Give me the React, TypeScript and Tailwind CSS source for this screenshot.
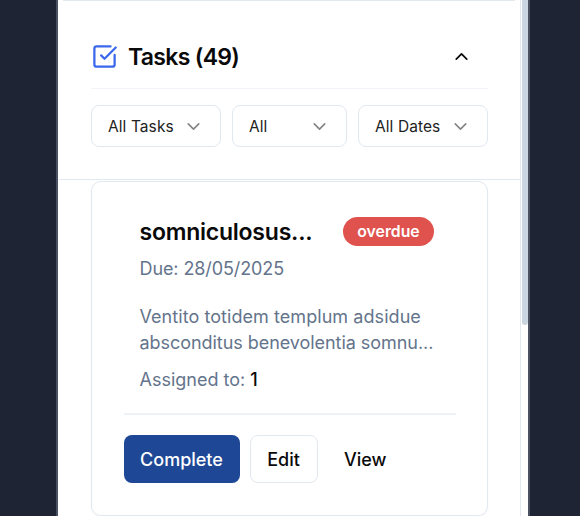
import { ChevronDown, ChevronUp, SquareCheckBig } from "lucide-react";

function Filter({ label, className }: { label: string; className: string }) {
  return (
    <button
      className={`flex h-[42px] items-center justify-between rounded-lg border border-[#e2e8f0] bg-white pl-4 pr-4 text-[15.5px] tracking-[0.08px] text-[#222] ${className}`}
    >
      <span className="pt-0.5">{label}</span>
      <ChevronDown size={21} strokeWidth={1.9} className="text-[#858585]" />
    </button>
  );
}

export default function App() {
  return (
    <div className="flex h-[516px] w-[580px] justify-center overflow-hidden bg-[#1e2433] font-['Inter',sans-serif] text-[#0a0a0a]">
      <div className="mr-[-6px] flex h-full w-[474px] border-x-2 border-[#4a5163] bg-white">
        <main className="h-full w-[463px] shrink-0 border-r border-[#e2e8f0]">
          <div className="mx-[5px] h-px bg-[#e2e8f0]" />
          <header className="ml-px h-[179px] border-b border-[#e2e8f0] pl-8 pr-8">
            <div className="flex h-[88px] items-center border-b border-[#f1f5f9] pt-[24px]">
              <SquareCheckBig size={27} strokeWidth={2} className="shrink-0 text-[#3b67ec]" />
              <h1 className="ml-[10px] text-[23px] font-semibold leading-7 tracking-[-0.68px]">Tasks (49)</h1>
              <ChevronUp size={21} strokeWidth={2} className="ml-auto mr-4" />
            </div>
            <div className="flex gap-[11px] pt-4">
              <Filter label="All Tasks" className="w-[130px]" />
              <Filter label="All" className="w-[115px]" />
              <Filter label="All Dates" className="w-[130px]" />
            </div>
          </header>
          <article className="ml-[33px] mr-8 mt-px h-[335px] rounded-[10px] border border-[#e2e8f0] pl-8 pr-[31px] pt-[35px] shadow-xs">
            <div className="pl-[15.5px] pr-[22px]">
              <div className="flex h-[29px] items-center justify-between">
                <h2 className="text-[23px] font-semibold leading-7 tracking-[-0.23px]">somniculosus...</h2>
                <span className="flex h-[29px] w-[91px] items-center justify-center rounded-full bg-[#df524d] text-[15.8px] font-semibold text-white">
                  overdue
                </span>
              </div>
              <p className="mt-[10px] text-[18px] leading-[26px] tracking-[-0.1px] text-[#64748b]">Due: 28/05/2025</p>
              <p className="mt-[22px] whitespace-nowrap text-[18px] leading-[26px] text-[#64748b]">
                <span className="tracking-[0.06px]">Ventito totidem templum adsidue</span>
                <br />
                <span className="tracking-[-0.05px]">absconditus benevolentia somnu...</span>
              </p>
              <p className="mt-[11px] text-[18px] leading-[26px] text-[#64748b]">
                Assigned to: <span className="font-medium text-[#0a0a0a]">1</span>
              </p>
            </div>
            <div className="mt-5 flex items-center border-t-2 border-[#edf2f7] pt-5 text-[18px] font-medium">
              <button className="h-12 w-[116px] rounded-lg bg-[#1e4896] pr-px text-white">Complete</button>
              <button className="ml-[10px] h-12 w-[68px] rounded-lg border border-[#e2e8f0] pr-px">Edit</button>
              <button className="ml-[26px]">View</button>
            </div>
          </article>
        </main>
        <div className="ml-px h-[325px] w-[6px] rounded-b-[3px] bg-[#cbd5e1]" />
      </div>
    </div>
  );
}
